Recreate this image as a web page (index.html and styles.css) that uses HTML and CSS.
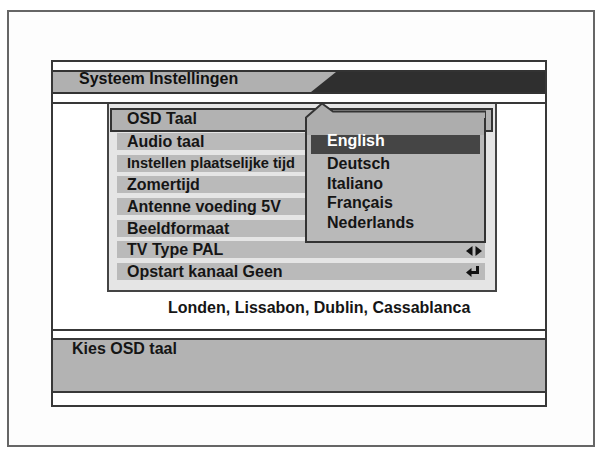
FILE: index.html
```html
<!DOCTYPE html>
<html lang="nl">
<head>
<meta charset="utf-8">
<title>Systeem Instellingen</title>
<link rel="stylesheet" href="styles.css">
</head>
<body>
<div class="frame">
  <div class="panel">
    <div class="strip"></div>
    <div class="titlebar">
      <div class="title-tab">Systeem Instellingen</div>
    </div>
    <div class="strip"></div>
    <div class="content">
      <div class="menu">
        <div class="row row-selected">OSD Taal</div>
        <div class="row">Audio taal</div>
        <div class="row row-small">Instellen plaatselijke tijd</div>
        <div class="row">Zomertijd</div>
        <div class="row">Antenne voeding 5V</div>
        <div class="row">Beeldformaat</div>
        <div class="row row-icon">
          <span>TV Type PAL</span>
          <svg class="icon icon-lr" width="16" height="10" viewBox="0 0 16 10"><polygon points="0,5 6.5,0 6.5,10" fill="#111"/><polygon points="16,5 9.5,0 9.5,10" fill="#111"/></svg>
        </div>
        <div class="row row-icon">
          <span>Opstart kanaal Geen</span>
          <svg class="icon icon-enter" width="14" height="11" viewBox="0 0 14 11"><path d="M11.5 0 V6.5 H4" fill="none" stroke="#111" stroke-width="3"/><polygon points="0,6.5 5.5,2 5.5,11" fill="#111"/></svg>
        </div>
      </div>
      <div class="zone">Londen, Lissabon, Dublin, Cassablanca</div>
      <div class="popup">
        <svg class="pointer" width="186" height="17" viewBox="0 0 186 17">
          <polygon points="0,10 8,10 3,16 0,16" fill="#b2b2b2"/>
          <polygon points="3,16 19,3 30,11 182,11 182,17 3,17" fill="#adadad"/>
          <polyline points="3,16.5 19,2.5 30,10.5 183,10.5" fill="none" stroke="#333" stroke-width="2"/>
        </svg>
        <div class="popup-head"></div>
        <div class="popup-list">
          <div class="lang lang-active">English</div>
          <div class="lang">Deutsch</div>
          <div class="lang">Italiano</div>
          <div class="lang">Français</div>
          <div class="lang">Nederlands</div>
        </div>
      </div>
    </div>
    <div class="divider"></div>
    <div class="help">Kies OSD taal</div>
    <div class="strip-bottom"></div>
  </div>
</div>
</body>
</html>
```

FILE: styles.css
```css
* { box-sizing: border-box; }

body {
  margin: 0;
  background: #ffffff;
  font-family: "Liberation Sans", Arial, sans-serif;
  font-weight: bold;
  font-size: 16px;
  color: #151515;
}

.frame {
  margin: 10px 0 0 7px;
  width: 588px;
  height: 437px;
  border: 2px solid #666666;
  background: #fdfdfd;
  padding: 48px 0 0 42px;
}

.panel {
  width: 496px;
  height: 347px;
  border: 2px solid #383838;
  background: #ffffff;
  display: flex;
  flex-direction: column;
}

.strip {
  height: 8px;
  flex: none;
}

.titlebar {
  flex: none;
  height: 24px;
  border-top: 2px solid #333333;
  border-bottom: 2px solid #333333;
  background: #2f2f2f;
  display: flex;
}

.title-tab {
  width: 283px;
  height: 20px;
  background: #b0b0b0;
  clip-path: polygon(0 0, 100% 0, calc(100% - 25px) 100%, 0 100%);
  padding-left: 26px;
  line-height: 13px;
  color: #111111;
}

.content {
  flex: none;
  height: 227px;
  border-top: 2px solid #383838;
  position: relative;
}

.menu {
  margin-left: 54px;
  width: 390px;
  height: 188px;
  border: 2px solid #444444;
  border-top: none;
  background: #e5e5e5;
  padding-top: 4px;
  display: flex;
  flex-direction: column;
}

.row {
  flex: none;
  height: 17px;
  line-height: 17px;
  margin: 4.67px 10px 0 8px;
  padding-left: 10px;
  background: #bababa;
  white-space: nowrap;
}

.row-selected {
  margin: 0 2px 0 1px;
  height: 24px;
  line-height: 18px;
  border: 2px solid #333333;
  background: #b2b2b2;
  padding-left: 15px;
}

.row-selected + .row {
  margin-top: 1px;
}

.row-small {
  font-size: 14.6px;
}

.row-icon {
  display: flex;
  align-items: center;
  justify-content: space-between;
  padding-right: 3px;
}

.icon {
  display: block;
  flex: none;
}

.icon-lr {
  margin-top: 2px;
}

.icon-enter {
  margin-top: 1px;
  margin-right: 2px;
}

.zone {
  margin-top: 7px;
  padding-left: 115px;
  line-height: 18px;
}

.popup {
  position: absolute;
  left: 252px;
  top: 8px;
  width: 181px;
  height: 131px;
  border: 2px solid #333333;
  border-top: none;
  background: #b9b9b9;
}

.pointer {
  position: absolute;
  left: -4px;
  top: -11px;
  display: block;
}

.popup-head {
  height: 23px;
  background: #adadad;
}

.popup-list {
  padding: 0 4px;
}

.lang {
  padding-left: 16px;
  line-height: 19.5px;
  color: #151515;
}

.lang-active {
  height: 19px;
  line-height: 12px;
  background: #454545;
  color: #ffffff;
}

.divider {
  flex: none;
  height: 9px;
  border-top: 2px solid #383838;
}

.help {
  flex: none;
  height: 55px;
  border-top: 2px solid #383838;
  border-bottom: 2px solid #383838;
  background: #b3b3b3;
  padding-left: 19px;
  line-height: 18px;
}

.strip-bottom {
  flex: 1;
}
```
